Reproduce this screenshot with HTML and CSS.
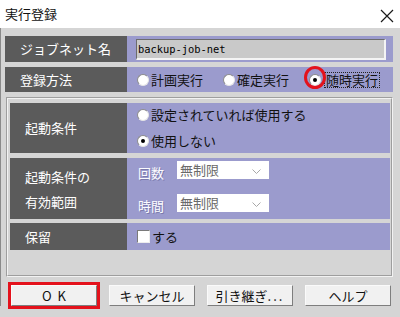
FILE: index.html
```html
<!DOCTYPE html>
<html lang="ja">
<head>
  <meta charset="UTF-8">
  <title>実行登録</title>
  <link rel="stylesheet" href="styles.css">
</head>
<body>
  <div class="titlebar">
    <span class="title">実行登録</span>
    <svg class="close" width="14" height="14" viewBox="0 0 14 14">
      <path d="M1 1 L13 13 M13 1 L1 13" stroke="#1a1a1a" stroke-width="1.2" fill="none"/>
    </svg>
  </div>

  <div class="dialog">
    <!-- ジョブネット名 -->
    <div class="row row-name">
      <div class="label">ジョブネット名</div>
      <div class="field field-name">
        <div class="textbox">backup-job-net</div>
      </div>
    </div>

    <!-- 登録方法 -->
    <div class="row row-method">
      <div class="label">登録方法</div>
      <div class="field field-method">
        <span class="radio-item"><span class="radio"></span>計画実行</span>
        <span class="radio-item"><span class="radio"></span>確定実行</span>
        <span class="radio-item marked">
          <span class="radio checked"></span><span class="focus">随時実行</span>
          <span class="mark"></span>
        </span>
      </div>
    </div>

    <div class="group">
      <!-- 起動条件 -->
      <div class="row row-cond">
        <div class="label">起動条件</div>
        <div class="field field-cond">
          <span class="radio-item"><span class="radio"></span>設定されていれば使用する</span>
          <span class="radio-item"><span class="radio checked"></span>使用しない</span>
        </div>
      </div>

      <!-- 起動条件の有効範囲 -->
      <div class="row row-range">
        <div class="label label-two">起動条件の<br>有効範囲</div>
        <div class="field field-range">
          <div class="range-line">
            <span class="sublabel">回数</span>
            <div class="select">無制限
              <svg class="chevron" width="9" height="5" viewBox="0 0 9 5">
                <path d="M0.5 0.5 L4.5 4.5 L8.5 0.5" stroke="#a8a8a8" fill="none"/>
              </svg>
            </div>
          </div>
          <div class="range-line">
            <span class="sublabel">時間</span>
            <div class="select">無制限
              <svg class="chevron" width="9" height="5" viewBox="0 0 9 5">
                <path d="M0.5 0.5 L4.5 4.5 L8.5 0.5" stroke="#a8a8a8" fill="none"/>
              </svg>
            </div>
          </div>
        </div>
      </div>

      <!-- 保留 -->
      <div class="row row-hold">
        <div class="label">保留</div>
        <div class="field field-hold">
          <span class="checkbox"></span>する
        </div>
      </div>
    </div>

    <div class="buttons">
      <button class="btn btn-ok">OK</button>
      <button class="btn">キャンセル</button>
      <button class="btn">引き継ぎ<span class="dots">...</span></button>
      <button class="btn">ヘルプ</button>
    </div>
  </div>
</body>
</html>
```

FILE: styles.css
```css
body {
  margin: 0;
  width: 400px;
  height: 317px;
  overflow: hidden;
  background-color: #d5d5d5;
  font-family: "Noto Sans CJK JP", "Noto Sans", sans-serif;
  font-size: 13px;
  color: #111;
}
.titlebar {
  height: 28px;
  background-color: #fff;
  display: flex;
  align-items: center;
  justify-content: space-between;
  padding: 0 6px 0 5px;
}
.title {
  font-size: 13px;
  line-height: 16px;
  margin-top: -1px;
}
.close {
  margin-top: 3px;
}
.dialog {
  padding: 8px 7px 0 5px;
  box-shadow: inset 1px 0 #8a8a8a;
}
.row {
  display: flex;
}
.label {
  width: 122px;
  flex: none;
  box-sizing: border-box;
  padding-left: 15px;
  background-color: #5b5b5b;
  color: #fff;
  display: flex;
  align-items: center;
  line-height: 16px;
}
.field {
  flex: 1;
  background-color: #9b9bcd;
  display: flex;
}
.row-name {
  height: 26px;
  margin-bottom: 5px;
}
.field-name {
  padding: 3px 7px 2px 9px;
}
.textbox {
  flex: 1;
  background-color: #c9c9c9;
  border-top: 1px solid #6c6c6c;
  border-left: 1px solid #6c6c6c;
  border-right: 2px solid #f4f4f4;
  border-bottom: 2px solid #f4f4f4;
  font-family: "DejaVu Sans Mono", monospace;
  font-size: 10.4px;
  line-height: 18px;
  padding-left: 1px;
  color: #000;
}
.row-method {
  height: 25px;
}
.field-method {
  align-items: center;
  padding-left: 10px;
  gap: 20px;
}
.radio-item {
  display: flex;
  align-items: center;
  line-height: 16px;
  white-space: nowrap;
}
.radio {
  width: 10px;
  height: 10px;
  border-radius: 50%;
  background-color: #fff;
  border: 1px solid;
  border-color: #8c8c8c #e6e6e6 #e6e6e6 #8c8c8c;
  margin-right: 2px;
  position: relative;
}
.radio.checked::after {
  content: "";
  position: absolute;
  left: 3px;
  top: 3px;
  width: 4px;
  height: 4px;
  border-radius: 50%;
  background-color: #000;
}
.marked {
  position: relative;
}
.focus {
  border: 1px dotted #222;
  padding: 0 1px;
  margin-left: 1px;
  line-height: 14px;
}
.mark {
  position: absolute;
  left: -5px;
  top: -6px;
  width: 16px;
  height: 17px;
  border: 3px solid #e4121c;
  border-radius: 50%;
}
.group {
  margin: 5px 0 0 1px;
  border: 2px groove #f2f2f2;
  padding: 4px 1px 25px 2px;
  display: flex;
  flex-direction: column;
}
.group .label {
  width: 117px;
}
.row-cond {
  height: 50px;
  margin-bottom: 5px;
}
.field-cond {
  flex-direction: column;
  justify-content: center;
  padding-left: 10px;
  gap: 10px;
}
.row-range {
  height: 61px;
  margin-bottom: 4px;
}
.label-two {
  line-height: 25px;
}
.field-range {
  flex-direction: column;
  padding: 3px 0 0 11px;
  gap: 13px;
}
.range-line {
  display: flex;
  align-items: flex-start;
}
.sublabel {
  width: 39px;
  padding-top: 4px;
  line-height: 16px;
  color: #fbfbff;
  text-shadow: 1px 1px 0 rgba(80, 80, 130, 0.45);
}
.select {
  width: 89px;
  height: 18px;
  background-color: #fff;
  padding-left: 3px;
  line-height: 16px;
  color: #6a6a6a;
  display: flex;
  align-items: center;
  justify-content: space-between;
}
.chevron {
  margin: 2px 8px 0 0;
}
.row-hold {
  height: 27px;
}
.field-hold {
  align-items: center;
  padding-left: 10px;
  line-height: 16px;
}
.checkbox {
  width: 11px;
  height: 11px;
  background-color: #fff;
  border: 1px solid;
  border-color: #7a7a7a #ededed #ededed #7a7a7a;
  margin-right: 2px;
}
.buttons {
  display: flex;
  gap: 12px;
  margin-top: 8px;
  padding-left: 6px;
}
.btn {
  width: 86px;
  height: 21px;
  padding: 0;
  font-family: "Noto Sans CJK JP", "Noto Sans", sans-serif;
  font-size: 13px;
  line-height: 16px;
  color: #111;
  background-color: #f1f1f1;
  border: 1px solid;
  border-color: #fafafa #7e7e7e #7e7e7e #fafafa;
}
.btn-ok {
  letter-spacing: 6px;
  padding-left: 6px;
  outline: 3px solid #e4121c;
  outline-offset: 0;
}
.dots {
  letter-spacing: 2px;
}
```
